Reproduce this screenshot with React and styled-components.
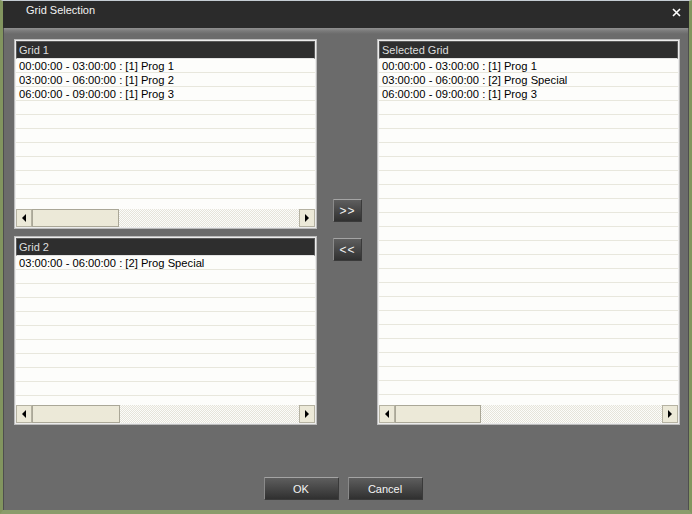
import React from 'react';
import styled, { createGlobalStyle } from 'styled-components';

const GlobalStyle = createGlobalStyle`
  html, body {
    margin: 0;
    padding: 0;
    background: #6b6b6b;
    font-family: "Liberation Sans", Arial, sans-serif;
  }
`;

const Window = styled.div`
  width: 692px;
  height: 514px;
  box-sizing: border-box;
  display: flex;
  flex-direction: column;
  overflow: hidden;
  border-top: 1px solid #c5ccd3;
  border-left: 3px solid #82955f;
  border-right: 3px solid #82955f;
  border-bottom: 4px solid #8a9c6c;
  background: #6b6b6b;
`;

const TitleBar = styled.div`
  height: 27px;
  flex: none;
  box-sizing: border-box;
  background: #2b2b2b;
  display: flex;
  justify-content: space-between;
  align-items: flex-start;
  padding: 3px 8px 0 23px;
  color: #f2f2f2;
  font-size: 11px;
  line-height: 13px;
`;

const CloseBtn = styled.div`
  margin-top: 4px;
  width: 9px;
  height: 9px;
  display: flex;
`;

const Client = styled.div`
  flex: 1;
  min-height: 0;
  display: flex;
  flex-direction: column;
  padding: 11px 9px 0 11px;
  background: linear-gradient(#909090 0, #7a7a7a 3px, #6b6b6b 6px, #6b6b6b 100%);
  box-shadow: inset 1px 0 0 #4e4e4e, inset -1px 0 0 #4e4e4e;
`;

const Main = styled.div`
  display: flex;
  height: 386px;
  flex: none;
`;

const LeftColumn = styled.div`
  width: 303px;
  display: flex;
  flex-direction: column;
  gap: 7px;
`;

const MiddleColumn = styled.div`
  width: 60px;
  display: flex;
  flex-direction: column;
  align-items: center;
  padding-top: 160px;
  padding-left: 1px;
  box-sizing: border-box;
  gap: 16px;
`;

const Panel = styled.div`
  width: 303px;
  flex: 1;
  min-height: 0;
  box-sizing: border-box;
  display: flex;
  flex-direction: column;
  border: 1px solid #bcbcbc;
  box-shadow: inset 0 0 0 1px #ececec;
  padding: 1px;
  background: #fbfbf9;
`;

const Header = styled.div`
  flex: none;
  background: #2e2e2e;
  color: #dedede;
  font-size: 11px;
  line-height: 16px;
  padding-left: 2px;
  border: 1px solid #5a5a5a;
  border-bottom-color: #e4e4e4;
  box-sizing: border-box;
  height: 18px;
`;

const List = styled.div`
  flex: 1;
  min-height: 0;
  overflow: hidden;
  background: #fdfdfb;
`;

const Row = styled.div`
  height: 12px;
  padding-top: 1px;
  border-bottom: 1px solid #e8e7dd;
  font-size: 11.2px;
  line-height: 13px;
  padding-left: 3px;
  color: #000;
  white-space: nowrap;
`;

const ScrollBar = styled.div`
  height: 18px;
  flex: none;
  display: flex;
  background-color: #f4f3ee;
  background-image: repeating-conic-gradient(#fcfcfa 0 25%, #e6e4da 0 50%);
  background-size: 2px 2px;
`;

const ScrollButton = styled.div`
  width: 16px;
  flex: none;
  box-sizing: border-box;
  background: #ece9d8;
  border: 1px solid #b5b2a2;
  display: flex;
  align-items: center;
  justify-content: center;
`;

const Arrow = styled.span`
  width: 0;
  height: 0;
  border-top: 4px solid transparent;
  border-bottom: 4px solid transparent;
  ${(p) => (p.$dir === 'left' ? 'border-right: 4px solid #000;' : 'border-left: 4px solid #000;')}
`;

const Thumb = styled.div`
  width: ${(p) => p.$width}px;
  flex: none;
  box-sizing: border-box;
  background: #ece9d8;
  border: 1px solid #aaa797;
`;

const Track = styled.div`
  flex: 1;
`;

const DarkButton = styled.button`
  width: ${(p) => p.$width}px;
  height: 23px;
  padding: 0;
  box-sizing: border-box;
  font-family: "Liberation Sans", Arial, sans-serif;
  font-size: ${(p) => (p.$arrows ? '12px' : '11px')};
  letter-spacing: ${(p) => (p.$arrows ? '1px' : '0')};
  color: #f4f4f4;
  background: linear-gradient(#5e5e5e, #303030);
  border: 1px solid #3a3a3a;
  border-top-color: #a4a4a4;
  border-left-color: #8a8a8a;
  border-radius: 1px;
  cursor: pointer;
`;

const Footer = styled.div`
  display: flex;
  justify-content: center;
  gap: 9px;
  padding-top: 52px;
  padding-right: 8px;
`;

const grid1 = [
  '00:00:00 - 03:00:00 : [1] Prog 1',
  '03:00:00 - 06:00:00 : [1] Prog 2',
  '06:00:00 - 09:00:00 : [1] Prog 3',
];
const grid2 = ['03:00:00 - 06:00:00 : [2] Prog Special'];
const selected = [
  '00:00:00 - 03:00:00 : [1] Prog 1',
  '03:00:00 - 06:00:00 : [2] Prog Special',
  '06:00:00 - 09:00:00 : [1] Prog 3',
];

function GridPanel({ title, items, thumb }) {
  const rows = [...items];
  while (rows.length < 30) rows.push('');
  return (
    <Panel>
      <Header>{title}</Header>
      <List>
        {rows.map((r, i) => (
          <Row key={i}>{r}</Row>
        ))}
      </List>
      <ScrollBar>
        <ScrollButton>
          <Arrow $dir="left" />
        </ScrollButton>
        <Thumb $width={thumb} />
        <Track />
        <ScrollButton>
          <Arrow $dir="right" />
        </ScrollButton>
      </ScrollBar>
    </Panel>
  );
}

export default function App() {
  return (
    <>
      <GlobalStyle />
      <Window>
        <TitleBar>
          <span>Grid Selection</span>
          <CloseBtn>
            <svg width="9" height="9" viewBox="0 0 9 9">
              <path d="M1 1L8 8M8 1L1 8" stroke="#fff" strokeWidth="1.6" />
            </svg>
          </CloseBtn>
        </TitleBar>
        <Client>
          <Main>
            <LeftColumn>
              <GridPanel title="Grid 1" items={grid1} thumb={87} />
              <GridPanel title="Grid 2" items={grid2} thumb={88} />
            </LeftColumn>
            <MiddleColumn>
              <DarkButton $width={29} $arrows>&gt;&gt;</DarkButton>
              <DarkButton $width={29} $arrows>&lt;&lt;</DarkButton>
            </MiddleColumn>
            <GridPanel title="Selected Grid" items={selected} thumb={86} />
          </Main>
          <Footer>
            <DarkButton $width={75}>OK</DarkButton>
            <DarkButton $width={75}>Cancel</DarkButton>
          </Footer>
        </Client>
      </Window>
    </>
  );
}
